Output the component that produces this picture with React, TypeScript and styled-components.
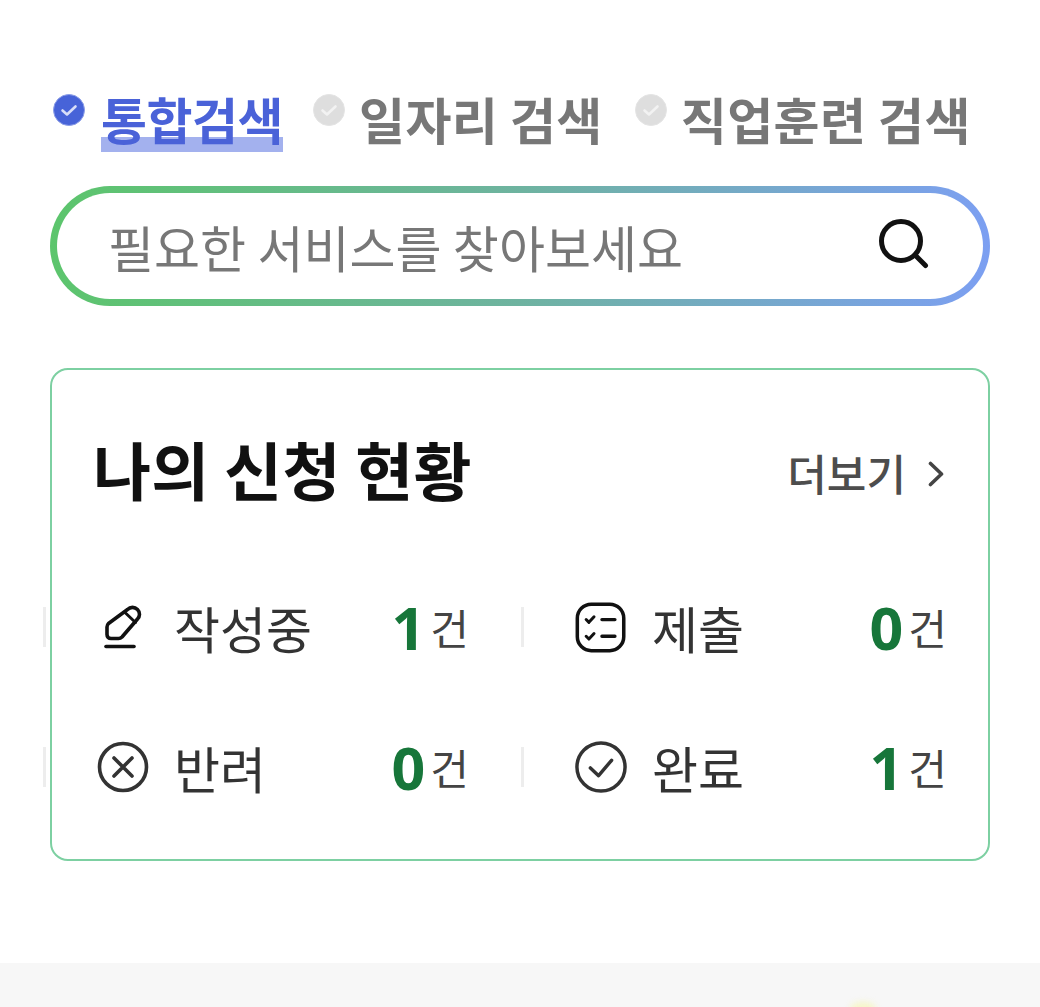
import React from "react";
import styled, { createGlobalStyle } from "styled-components";

const Global = createGlobalStyle`
  html, body { margin: 0; padding: 0; background: #fff; }
  body { font-family: "Noto Sans CJK KR", "Noto Sans", sans-serif; }
`;

const Page = styled.div`
  width: 1040px;
  height: 1007px;
  display: flex;
  flex-direction: column;
  overflow: hidden;
  position: relative;
`;

const Main = styled.main`
  flex: 1;
  padding: 90px 50px 0;
  display: flex;
  flex-direction: column;
`;

const Tabs = styled.nav`
  display: flex;
  align-items: flex-start;
  height: 62px;
  padding-left: 1px;
`;

const Tab = styled.div<{ $active?: boolean }>`
  display: flex;
  align-items: flex-start;
  gap: ${(p) => (p.$active ? "14px" : "12px")};
  margin-right: ${(p) => (p.$active ? "28px" : "30px")};
`;

const TabDot = styled.svg`
  width: 36px;
  height: 36px;
  margin-top: 2px;
  flex: none;
`;

const TabLabel = styled.span<{ $active?: boolean }>`
  font-size: 50px;
  font-weight: 700;
  line-height: 60px;
  margin-top: -2px;
  height: 64px;
  white-space: nowrap;
  letter-spacing: ${(p) => (p.$active ? "-0.5px" : "0.4px")};
  color: ${(p) => (p.$active ? "#4a62d8" : "#777777")};
  background: ${(p) =>
    p.$active
      ? "linear-gradient(#a3b1ee, #a3b1ee) left bottom / 100% 15px no-repeat"
      : "none"};
`;

const SearchBox = styled.div`
  margin-top: 34px;
  height: 120px;
  box-sizing: border-box;
  border: 7px solid transparent;
  border-radius: 60px;
  background:
    linear-gradient(#fff, #fff) padding-box,
    linear-gradient(92deg, #5cc56c 0%, #6eb3a0 50%, #7c9ff2 100%) border-box;
  display: flex;
  align-items: center;
  padding: 0 51px 0 51px;
  justify-content: space-between;
`;

const Placeholder = styled.span`
  font-size: 50px;
  line-height: 60px;
  letter-spacing: 0.05px;
  color: #777777;
  white-space: nowrap;
`;

const SearchGlyph = styled.svg`
  margin-bottom: 4px;
`;

const Card = styled.section`
  margin-top: 62px;
  height: 493px;
  box-sizing: border-box;
  border: 2px solid #7dd0a2;
  border-radius: 18px;
  padding: 0 43px;
  display: flex;
  flex-direction: column;
`;

const CardHead = styled.header`
  margin-top: 60px;
  height: 76px;
  display: flex;
  align-items: center;
  justify-content: space-between;
`;

const CardTitle = styled.h2`
  margin: 0 0 0 -2px;
  font-size: 63px;
  font-weight: 700;
  line-height: 76px;
  letter-spacing: 0.3px;
  color: #111;
  white-space: nowrap;
`;

const More = styled.a`
  display: flex;
  align-items: center;
  gap: 22px;
  margin: 8px 1px 0 0;
  font-size: 43px;
  font-weight: 500;
  line-height: 50px;
  color: #4d4d4d;
`;

const ChevronGlyph = styled.svg`
  margin-top: 4px;
`;

const Grid = styled.div`
  margin: 51px -54px 0 -52px;
  display: grid;
  grid-template-columns: 478px 478px;
  grid-auto-rows: 140px;
`;

const Cell = styled.div`
  position: relative;
  display: flex;
  align-items: center;
  padding: 0 52px 0 54px;
  &::before {
    content: "";
    position: absolute;
    left: 0;
    top: 50px;
    width: 3px;
    height: 40px;
    background: #ededed;
  }
`;

const IconSlot = styled.div`
  width: 52px;
  margin-right: 25px;
  display: flex;
  justify-content: center;
  flex: none;
`;

const Label = styled.span`
  font-size: 50px;
  line-height: 60px;
  color: #333;
  white-space: nowrap;
`;

const Count = styled.div`
  margin-left: auto;
  display: flex;
  align-items: center;
  gap: 5px;
`;

const Num = styled.strong`
  font-family: "Noto Sans", sans-serif;
  font-size: 59px;
  font-weight: 700;
  line-height: 60px;
  color: #17763a;
`;

const Unit = styled.span`
  font-size: 42px;
  line-height: 60px;
  color: #444;
`;

const Footer = styled.div`
  height: 44px;
  background: #f7f7f7;
  flex: none;
  position: relative;
  overflow: hidden;
  &::after {
    content: "";
    position: absolute;
    left: 850px;
    top: 39px;
    width: 26px;
    height: 14px;
    border-radius: 50%;
    background: #f6f6c8;
    filter: blur(3px);
  }
`;

const Dot = ({ active }: { active?: boolean }) => (
  <TabDot viewBox="0 0 36 36">
    <circle
      cx="18"
      cy="18"
      r="15.5"
      fill={active ? "#4763d8" : "#dedede"}
      stroke={active ? "#8c9ee8" : "#e4e4e4"}
      strokeWidth="1"
    />
    <path
      d="M11.5 18.5l4.5 4 8.5-8"
      fill="none"
      stroke={active ? "#d8def8" : "#f2f2f2"}
      strokeWidth="2.6"
      strokeLinecap="round"
      strokeLinejoin="round"
    />
  </TabDot>
);

const SearchIcon = () => (
  <SearchGlyph width="56" height="56" viewBox="0 0 56 56" fill="none" stroke="#111" strokeWidth="5" strokeLinecap="round">
    <circle cx="25" cy="25" r="19.5" />
    <path d="M39.5 39.5l10 10" />
  </SearchGlyph>
);

const Chevron = () => (
  <ChevronGlyph width="16" height="26" viewBox="0 0 16 26" fill="none" stroke="#444" strokeWidth="3.6" strokeLinecap="round" strokeLinejoin="round">
    <path d="M2.5 2.5L13.5 13L2.5 23.5" />
  </ChevronGlyph>
);

const PencilIcon = () => (
  <svg width="38" height="46" viewBox="0 0 38 46" fill="none" stroke="#111" strokeWidth="3.6" strokeLinecap="round" strokeLinejoin="round">
    <path d="M23.5 5.5c2.8-2.8 7.2-2.8 10 0s2.5 7 0 9.5L18 33c-1 1-2.2 1.5-3.5 1.5H7c-2.5 0-4-1.5-4-4V23c0-1.5.5-2.5 1.5-3.5z" />
    <path d="M21 8.5l10.5 10" strokeWidth="3" />
    <path d="M2 42.5h28" />
  </svg>
);

const ListIcon = () => (
  <svg width="56" height="56" viewBox="0 0 56 56" fill="none" stroke="#111" strokeLinecap="round" strokeLinejoin="round">
    <rect x="2.5" y="3.5" width="50" height="50" rx="15" strokeWidth="3.8" />
    <path d="M12 20l3 3 5.5-6M12 38l3 3 5.5-6" strokeWidth="3.2" />
    <path d="M29 20h14M29 38h14" strokeWidth="3.6" />
  </svg>
);

const XCircleIcon = () => (
  <svg width="52" height="52" viewBox="0 0 52 52" fill="none" stroke="#333" strokeWidth="3.6" strokeLinecap="round">
    <circle cx="26" cy="26" r="23.5" />
    <path d="M17 17l18 18M35 17L17 35" />
  </svg>
);

const CheckCircleIcon = () => (
  <svg width="54" height="54" viewBox="0 0 54 54" fill="none" stroke="#333" strokeWidth="3.6" strokeLinecap="round" strokeLinejoin="round">
    <circle cx="27" cy="27" r="25" />
    <path d="M16 28l8.5 8L38 20" />
  </svg>
);

const rows = [
  { icon: <PencilIcon />, label: "작성중", num: 1 },
  { icon: <ListIcon />, label: "제출", num: 0 },
  { icon: <XCircleIcon />, label: "반려", num: 0 },
  { icon: <CheckCircleIcon />, label: "완료", num: 1 },
];

export default function App() {
  return (
    <Page>
      <Global />
      <Main>
        <Tabs>
          <Tab $active>
            <Dot active />
            <TabLabel $active>통합검색</TabLabel>
          </Tab>
          <Tab>
            <Dot />
            <TabLabel>일자리 검색</TabLabel>
          </Tab>
          <Tab>
            <Dot />
            <TabLabel>직업훈련 검색</TabLabel>
          </Tab>
        </Tabs>
        <SearchBox>
          <Placeholder>필요한 서비스를 찾아보세요</Placeholder>
          <SearchIcon />
        </SearchBox>
        <Card>
          <CardHead>
            <CardTitle>나의 신청 현황</CardTitle>
            <More>
              더보기
              <Chevron />
            </More>
          </CardHead>
          <Grid>
            {rows.map((r) => (
              <Cell key={r.label}>
                <IconSlot>{r.icon}</IconSlot>
                <Label>{r.label}</Label>
                <Count>
                  <Num>{r.num}</Num>
                  <Unit>건</Unit>
                </Count>
              </Cell>
            ))}
          </Grid>
        </Card>
      </Main>
      <Footer />
    </Page>
  );
}
